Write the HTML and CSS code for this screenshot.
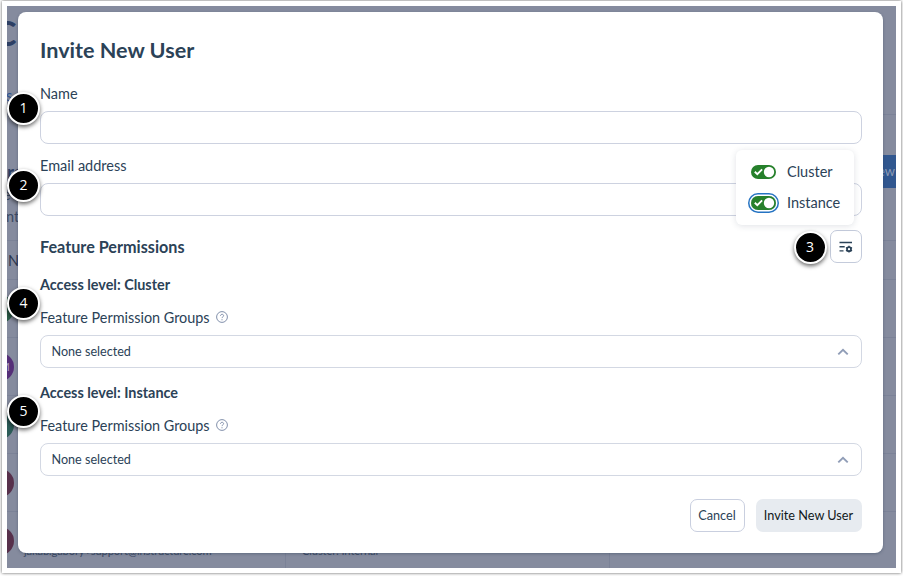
FILE: index.html
```html
<!DOCTYPE html>
<html lang="en">
<head>
    <meta charset="UTF-8">
    <meta name="viewport" content="width=device-width, initial-scale=1.0">
    <title>Invite New User</title>
    <link rel="stylesheet" href="styles.css">
</head>
<body>
    <div class="frame">
        <div class="backdrop">
            <div class="page-header"><span class="page-title">C</span><span class="tab">s</span></div>
            <div class="page-intro">
                <div class="intro-text">
                    <div class="intro-title">rs</div>
                    <div class="intro-line">e h</div>
                    <div>nt.</div>
                </div>
                <div class="new-button">ew</div>
            </div>
            <div class="table-head">N</div>
            <div class="table-row"><span class="avatar green"></span></div>
            <div class="table-row"><span class="avatar purple">M</span></div>
            <div class="table-row"><span class="avatar teal"></span></div>
            <div class="table-row"><span class="avatar plum"></span></div>
            <div class="table-row last">
                <div class="cell-user"><span class="avatar plum"></span><span class="cell-text">jakab.gabory+support@instructure.com</span></div>
                <div class="cell-role"><span class="cell-text">Cluster: Internal</span></div>
                <div class="cell-rest"></div>
            </div>
        </div>

        <div class="modal">
            <h1>Invite New User</h1>

            <div class="field">
                <label for="name">Name</label>
                <input type="text" id="name" name="name">
                <span class="step">1</span>
            </div>

            <div class="field">
                <label for="email">Email address</label>
                <input type="text" id="email" name="email">
                <span class="step step-email">2</span>
            </div>

            <div class="section-head">
                <h2>Feature Permissions</h2>
                <div class="settings">
                    <span class="step step-settings">3</span>
                    <button type="button" class="icon-button" aria-label="Access levels">
                        <svg width="16" height="14" viewBox="0 0 16 14" fill="none" stroke="#2b4257" stroke-width="1.4">
                            <path d="M1.5 2.5h12.5M1.5 6.7h5.2M1.5 10.9h4"/>
                            <circle cx="11" cy="9.2" r="2" stroke-width="1.7"/>
                            <path d="M11 5.8v1.4M11 11.2v1.4M8 7.5l1.3.8M12.7 10.1l1.3.8M8 10.9l1.3-.8M12.7 8.3l1.3-.8"/>
                        </svg>
                    </button>
                    <div class="menu">
                        <div class="menu-item">
                            <span class="toggle">
                                <svg width="25" height="14" viewBox="0 0 25 14"><rect width="25" height="14" rx="7" fill="#26802b"/><circle cx="18" cy="7" r="5.2" fill="#fff"/><path d="M3.8 6.7l2.5 2.4 4.8-4.8" fill="none" stroke="#fff" stroke-width="1.9"/></svg>
                            </span>
                            Cluster
                        </div>
                        <div class="menu-item">
                            <span class="toggle focused">
                                <svg width="25" height="14" viewBox="0 0 25 14"><rect width="25" height="14" rx="7" fill="#26802b"/><circle cx="18" cy="7" r="5.2" fill="#fff"/><path d="M3.8 6.7l2.5 2.4 4.8-4.8" fill="none" stroke="#fff" stroke-width="1.9"/></svg>
                            </span>
                            Instance
                        </div>
                    </div>
                </div>
            </div>

            <div class="access">
                <h3>Access level: Cluster</h3>
                <div class="group-label">
                    Feature Permission Groups
                    <svg width="12" height="12" viewBox="0 0 12 12" fill="none" stroke="#8290ab"><circle cx="6" cy="6" r="5.4"/><path d="M4.5 4.8c0-2 3.1-2 3.1-.1C7.6 5.9 6 5.8 6 7.1M6 8.2v1.1"/></svg>
                </div>
                <div class="select">
                    None selected
                    <svg width="12" height="8" viewBox="0 0 12 8" fill="none" stroke="#909db7" stroke-width="1.9"><path d="M1.3 6.4L6 1.8l4.7 4.6"/></svg>
                </div>
                <span class="step step-access">4</span>
            </div>

            <div class="access">
                <h3>Access level: Instance</h3>
                <div class="group-label">
                    Feature Permission Groups
                    <svg width="12" height="12" viewBox="0 0 12 12" fill="none" stroke="#8290ab"><circle cx="6" cy="6" r="5.4"/><path d="M4.5 4.8c0-2 3.1-2 3.1-.1C7.6 5.9 6 5.8 6 7.1M6 8.2v1.1"/></svg>
                </div>
                <div class="select">
                    None selected
                    <svg width="12" height="8" viewBox="0 0 12 8" fill="none" stroke="#909db7" stroke-width="1.9"><path d="M1.3 6.4L6 1.8l4.7 4.6"/></svg>
                </div>
                <span class="step step-access">5</span>
            </div>

            <div class="actions">
                <button type="button" class="cancel">Cancel</button>
                <button type="button" class="submit">Invite New User</button>
            </div>
        </div>
    </div>
</body>
</html>
```
FILE: styles.css
```css
* {
    box-sizing: border-box;
}
body {
    font-family: Lato, sans-serif;
    background-color: white;
    margin: 0;
    padding: 1px 2px 3px;
    height: 576px;
    overflow: hidden;
    color: #2b4257;
    font-size: 14.5px;
}
.frame {
    position: relative;
    height: 572px;
    padding: 5px;
    background: white;
    box-shadow: 0 0 3px rgba(0, 0, 0, 0.65);
}

/* page behind the dialog */
.backdrop {
    height: 562px;
    background: #858b9e;
    overflow: hidden;
    color: #3b4963;
}
.page-header {
    height: 109px;
    border-bottom: 1px solid #7b8297;
    position: relative;
}
.page-title {
    position: absolute;
    left: -13px;
    top: 3px;
    font-size: 34px;
    line-height: 48px;
    font-weight: bold;
    color: #2d3f64;
}
.tab {
    position: absolute;
    left: -1px;
    top: 81px;
    color: #2d5594;
}
.page-intro {
    height: 126px;
    display: flex;
    justify-content: space-between;
    border-bottom: 1px solid #7b8297;
}
.intro-text {
    padding-top: 44px;
    line-height: 20px;
}
.intro-title {
    font-size: 19px;
    font-weight: bold;
    line-height: 26px;
    color: #2d3f64;
}
.intro-line {
    margin-left: -4px;
}
.intro-text div:last-child {
    padding-top: 2px;
    margin-left: -1px;
}
.new-button {
    width: 40px;
    height: 33px;
    margin-top: 40px;
    padding-right: 1px;
    background: #31578f;
    color: #8d9bb5;
    text-align: right;
    font-size: 13px;
    line-height: 33px;
}
.table-head {
    height: 39px;
    padding-left: 1px;
    line-height: 40px;
    color: #2b364f;
    border-bottom: 1px solid #7b8297;
}
.table-row {
    height: 58px;
    display: flex;
    align-items: center;
    border-bottom: 1px solid #7b8297;
}
.avatar {
    width: 28px;
    height: 28px;
    flex: none;
    margin-left: -21px;
    padding-right: 4px;
    border-radius: 50%;
    text-align: right;
    font-size: 12px;
    line-height: 28px;
    color: #a79bb9;
}
.green { background: #2c5c48; }
.purple { background: #552f78; }
.teal { background: #2c5c58; }
.plum { background: #57304b; }
.last {
    align-items: stretch;
}
.cell-user, .cell-role {
    display: flex;
    border-right: 1px solid #7b8297;
}
.cell-user {
    width: 279px;
    align-items: center;
}
.cell-role {
    width: 324px;
    padding-left: 16px;
}
.cell-text {
    align-self: flex-start;
    margin-top: 31px;
    font-size: 11.2px;
    line-height: 16px;
    letter-spacing: -0.15px;
}
.cell-user .cell-text {
    margin-left: 10px;
}

.modal {
    position: absolute;
    left: 16px;
    top: 11px;
    width: 865px;
    height: 541px;
    padding: 23px 22px 0;
    background: white;
    border-radius: 8px;
    box-shadow: 0 1px 3px rgba(45, 63, 85, 0.4);
}
h1, h2, h3 {
    margin: 0;
}
h1 {
    font-size: 21.6px;
    line-height: 30px;
    margin-bottom: 17px;
}
h2 {
    font-size: 16.2px;
    line-height: 20px;
}
h3 {
    font-size: 14.4px;
    line-height: 20px;
}
.field {
    position: relative;
    height: 72px;
}
.field label {
    display: block;
    line-height: 22px;
    padding: 1px 0 6px;
}
.field input {
    display: block;
    width: 100%;
    height: 33px;
    border: 1px solid #cdd2e0;
    border-radius: 8px;
    outline: none;
}
.field, .section-head, .access, .actions {
    margin-right: -0.5px;
}
.section-head {
    display: flex;
    align-items: center;
    justify-content: space-between;
    height: 33px;
    margin-top: 4px;
    margin-bottom: 12px;
}
.settings {
    position: relative;
}
.icon-button {
    display: flex;
    align-items: center;
    justify-content: center;
    width: 32px;
    height: 33px;
    padding: 0;
    border: 1px solid #c4cbdb;
    border-radius: 7px;
    background: white;
}
.menu {
    position: absolute;
    right: 7.5px;
    bottom: 38px;
    width: 118px;
    height: 75px;
    padding: 6px 0 0 15px;
    background: white;
    border-radius: 6px;
    box-shadow: 0 1px 6px rgba(45, 63, 85, 0.15);
}
.menu-item {
    display: flex;
    align-items: center;
    gap: 11px;
    height: 31px;
    line-height: 18px;
}
.toggle {
    display: flex;
    border-radius: 10px;
}
.focused {
    box-shadow: 0 0 0 1.5px white, 0 0 0 3px #2573c2;
}
.access {
    position: relative;
    height: 108px;
}
.group-label {
    display: flex;
    align-items: center;
    gap: 6px;
    height: 20px;
    margin: 12px 0 8px;
    font-size: 14.4px;
}
.select {
    display: flex;
    align-items: center;
    justify-content: space-between;
    height: 33px;
    padding: 0 12px 0 10.5px;
    border: 1px solid #d3d8e3;
    border-radius: 8px;
    font-size: 12.6px;
    line-height: 16px;
}
.actions {
    display: flex;
    justify-content: flex-end;
    gap: 11px;
    margin-top: 8px;
}
.actions button {
    height: 33px;
    padding: 0 0 1px;
    border-radius: 7px;
    font-family: inherit;
    font-size: 12.7px;
}
.actions .cancel {
    width: 55px;
    border: 1px solid #c9cfdf;
    background: white;
    color: #2b4257;
}
.actions .submit {
    width: 106px;
    border: none;
    background: #e7ebf0;
    color: #111820;
}

/* numbered callouts */
.step {
    position: absolute;
    left: -33px;
    top: 10px;
    width: 33px;
    height: 33px;
    border: 2px solid white;
    border-radius: 50%;
    background: black;
    color: white;
    font-family: "Open Sans", sans-serif;
    font-size: 14px;
    line-height: 28px;
    text-align: center;
    box-shadow: 0 2px 4px rgba(0, 0, 0, 0.6);
}
.step-email {
    top: 15px;
}
.step-access {
    top: 12px;
}
.step-settings {
    left: -36px;
    top: 1px;
}
```
